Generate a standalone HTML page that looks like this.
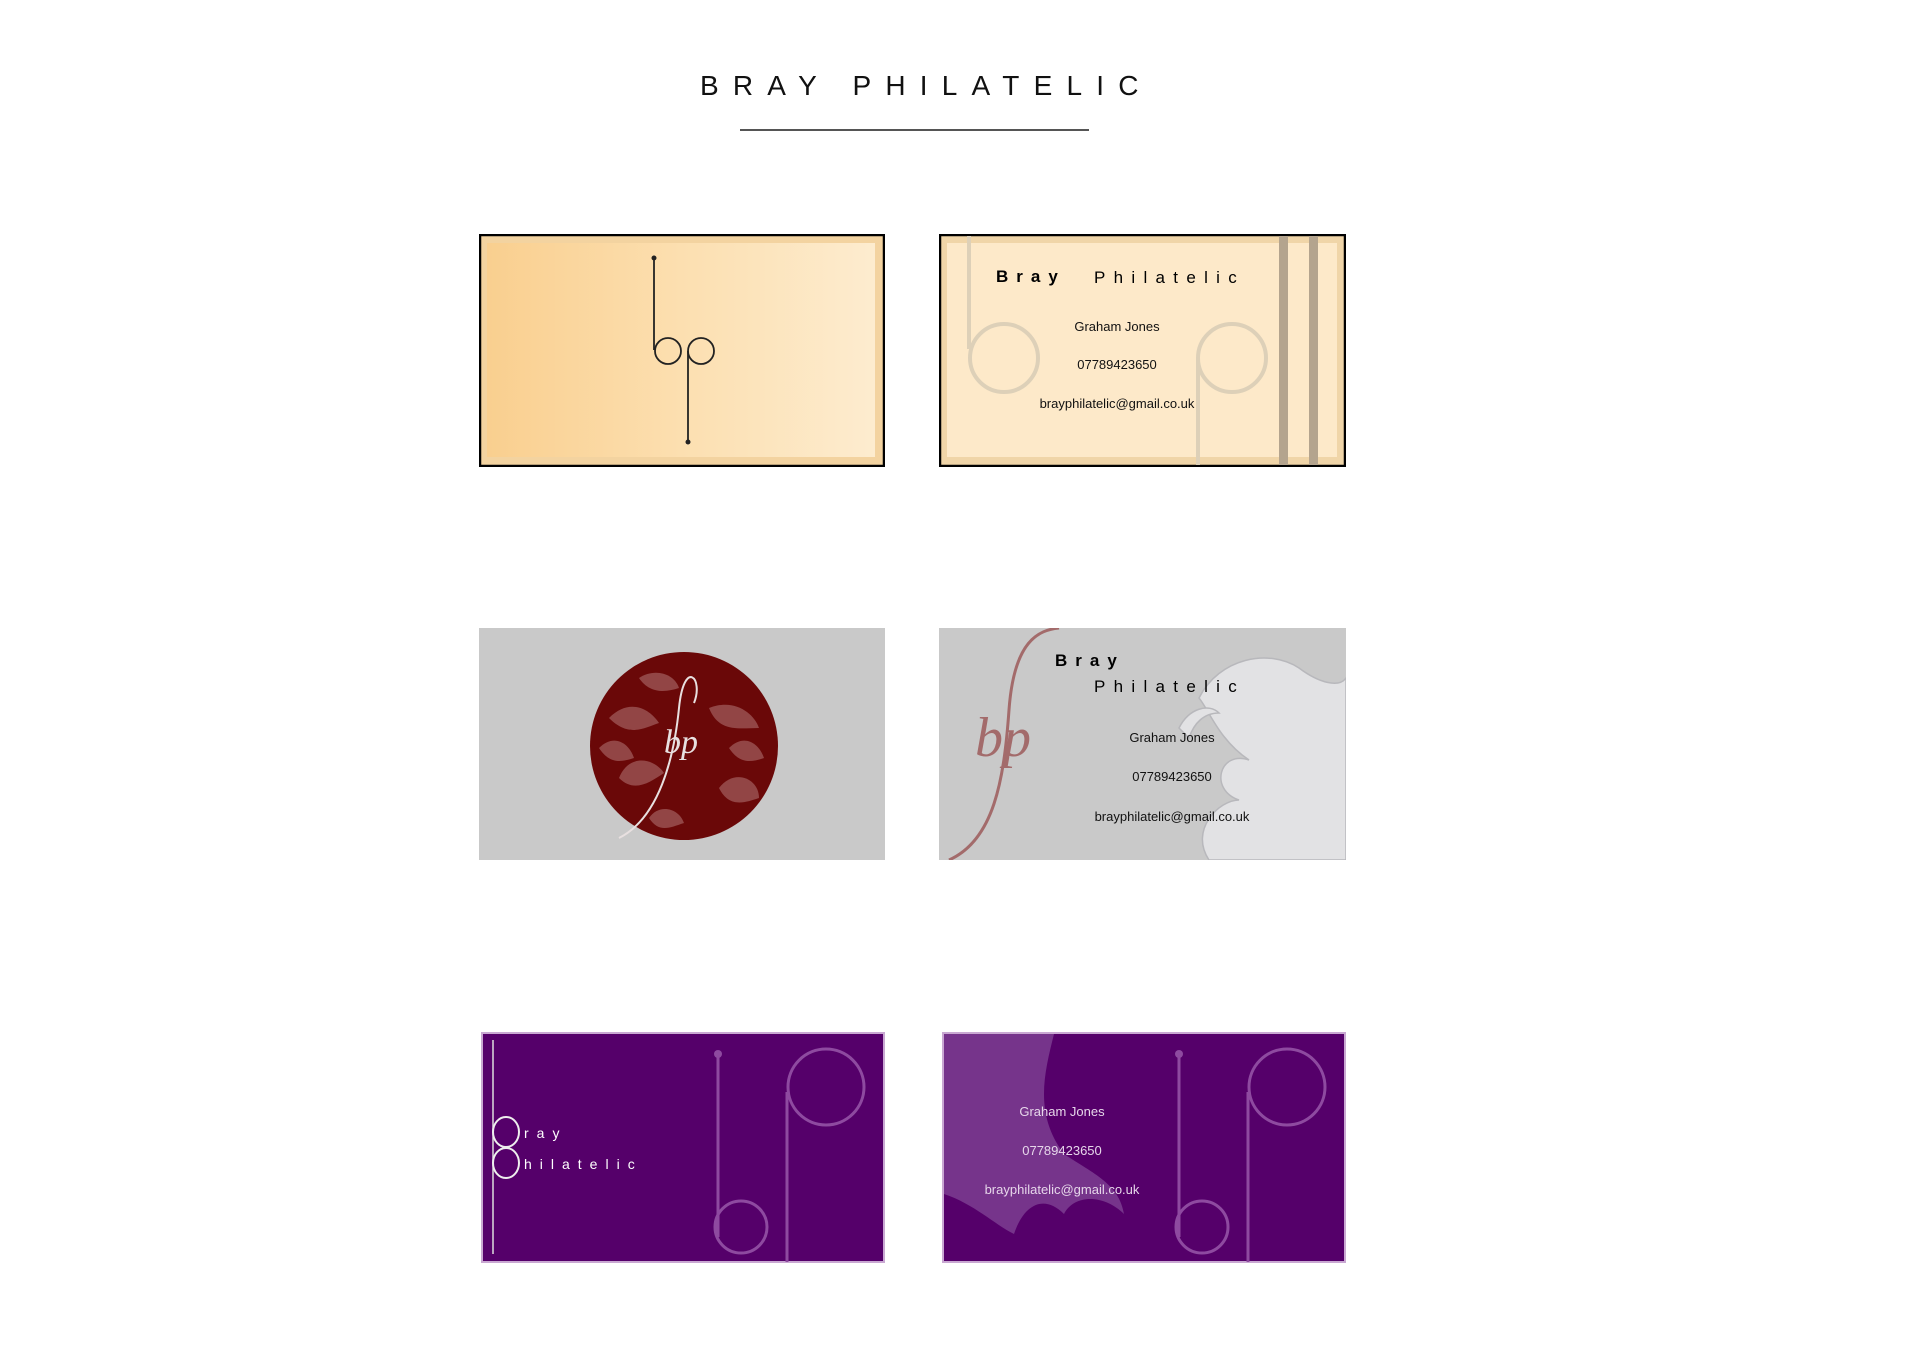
<!DOCTYPE html>
<html><head><meta charset="utf-8"><style>
body{margin:0;background:#fff;width:1920px;height:1358px;position:relative;overflow:hidden;font-family:"Liberation Sans",sans-serif}
.t{position:absolute;left:700px;top:70px;font-size:28px;letter-spacing:14.2px;color:#111;white-space:nowrap}
.u{position:absolute;left:740px;top:129px;width:349px;height:2px;background:#555}
svg{position:absolute}
</style></head><body>
<div class="t">BRAY PHILATELIC</div>
<div class="u"></div>

<!-- card 1 -->
<svg style="left:479px;top:234px" width="406" height="233" viewBox="0 0 406 233">
<defs><linearGradient id="g1" x1="0" x2="1"><stop offset="0" stop-color="#f9cf8f"/><stop offset="0.5" stop-color="#fcdfb0"/><stop offset="1" stop-color="#fdeccf"/></linearGradient></defs>
<rect x="1" y="1" width="404" height="231" fill="#f3d3a0" stroke="#000" stroke-width="2.5"/>
<rect x="8" y="9" width="388" height="214" fill="url(#g1)"/>
<g fill="none" stroke="#222" stroke-width="1.8">
<line x1="175" y1="24" x2="175" y2="116"/>
<ellipse cx="189" cy="117" rx="13" ry="13"/>
<ellipse cx="222" cy="117" rx="13" ry="13"/>
<line x1="209" y1="117" x2="209" y2="208"/>
</g>
<circle cx="175" cy="24" r="2.5" fill="#222"/><circle cx="209" cy="208" r="2.5" fill="#222"/>
</svg>

<!-- card 2 -->
<svg style="left:939px;top:234px" width="407" height="233" viewBox="0 0 407 233" font-family="Liberation Sans, sans-serif">
<rect x="1" y="1" width="405" height="231" fill="#f0d5a8" stroke="#000" stroke-width="2.5"/>
<rect x="8" y="9" width="390" height="214" fill="#fde9c9"/>
<rect x="340" y="2" width="9" height="229" fill="#b4a48e"/>
<rect x="370" y="2" width="9" height="229" fill="#b4a48e"/>
<g fill="none" stroke="#ddd0b8" stroke-width="4">
<line x1="30" y1="2" x2="30" y2="115"/>
<circle cx="65" cy="124" r="34"/>
<circle cx="293" cy="124" r="34"/>
<line x1="259" y1="124" x2="259" y2="231"/>
</g>
<text x="57" y="48" font-size="17" font-weight="bold" letter-spacing="8">Bray</text>
<text x="155" y="49" font-size="17" letter-spacing="8.3">Philatelic</text>
<g font-size="13" text-anchor="middle" fill="#111">
<text x="178" y="97">Graham Jones</text>
<text x="178" y="135">07789423650</text>
<text x="178" y="174">brayphilatelic@gmail.co.uk</text>
</g>
</svg>

<!-- card 3 -->
<svg style="left:479px;top:628px" width="406" height="232" viewBox="0 0 406 232">
<rect width="406" height="232" fill="#c9c9c9"/>
<circle cx="205" cy="118" r="94" fill="#6a0808"/>
<g fill="#a05a5a" opacity="0.75">
<path d="M130 90c20-20 40-10 50 5-15 5-30 15-50-5z"/><path d="M140 150c10-25 35-20 45-5-15 10-30 20-45 5z"/>
<path d="M230 80c25-10 45 5 50 20-20 0-40 5-50-20z"/><path d="M240 160c15-20 40-10 40 10-15 5-30 10-40-10z"/>
<path d="M160 50c15-10 35-5 40 10-15 5-30 5-40-10z"/><path d="M170 190c10-15 30-10 35 5-15 5-25 10-35-5z"/>
<path d="M120 120c15-15 30-5 35 10-15 5-25 5-35-10z"/><path d="M250 120c15-15 30-5 35 10-15 5-25 5-35-10z"/>
</g>
<path d="M140 210c40-20 55-80 60-130s25-30 15-5" fill="none" stroke="#e8e0e0" stroke-width="2"/>
<text x="185" y="125" font-family="Liberation Serif,serif" font-style="italic" font-size="34" fill="#e8e0e0">bp</text>
</svg>

<!-- card 4 -->
<svg style="left:939px;top:628px" width="407" height="232" viewBox="0 0 407 232" font-family="Liberation Sans, sans-serif">
<rect width="407" height="232" fill="#c9c9c9"/>
<g fill="#e2e2e4" stroke="#b8b8bc" stroke-width="1.5">
<path d="M260 70c20-40 70-50 100-30 20 15 40 20 47 10v182H270c-20-30 10-60 30-60-30-10-20-50 10-40-30-20-40-50-50-62z"/>
<path d="M240 100c10-20 30-25 40-15-15 0-25 10-30 25z"/>
</g>
<path d="M10 232c45-20 55-80 60-150s30-80 50-82" fill="none" stroke="#a36b6b" stroke-width="3"/>
<text x="36" y="128" font-family="Liberation Serif,serif" font-style="italic" font-size="56" fill="#a36b6b">bp</text>
<text x="116" y="38" font-size="17" font-weight="bold" letter-spacing="8">Bray</text>
<text x="155" y="64" font-size="17" letter-spacing="8.3">Philatelic</text>
<g font-size="13" text-anchor="middle" fill="#111">
<text x="233" y="114">Graham Jones</text>
<text x="233" y="153">07789423650</text>
<text x="233" y="193">brayphilatelic@gmail.co.uk</text>
</g>
</svg>

<!-- card 5 -->
<svg style="left:481px;top:1032px" width="404" height="231" viewBox="0 0 404 231" font-family="Liberation Sans, sans-serif">
<rect x="1" y="1" width="402" height="229" fill="#55006a" stroke="#c9a8d2" stroke-width="2"/>
<g fill="none" stroke="#8e4aa0" stroke-width="3">
<line x1="237" y1="22" x2="237" y2="205"/>
<circle cx="260" cy="195" r="26"/>
<line x1="306" y1="60" x2="306" y2="230"/>
<circle cx="345" cy="55" r="38"/>
</g>
<circle cx="237" cy="22" r="4" fill="#8e4aa0"/>
<line x1="12" y1="8" x2="12" y2="222" stroke="#ddd" stroke-width="1.5"/>
<g fill="none" stroke="#eee" stroke-width="2"><ellipse cx="25" cy="100" rx="13" ry="15"/><ellipse cx="25" cy="131" rx="13" ry="15"/></g>
<g fill="#fff" font-size="14" letter-spacing="8"><text x="43" y="106">ray</text><text x="43" y="137">hilatelic</text></g>
</svg>

<!-- card 6 -->
<svg style="left:942px;top:1032px" width="404" height="231" viewBox="0 0 404 231" font-family="Liberation Sans, sans-serif">
<rect x="1" y="1" width="402" height="229" fill="#55006a" stroke="#c9a8d2" stroke-width="2"/>
<g fill="#7a3a8f" opacity="0.9">
<path d="M2 2h110c-10 40-20 80 10 120 30 20 55 30 60 60-20-20-50-20-60 0-20-20-40-10-50 20-20-10-40-30-70-40z"/>
</g>
<g fill="none" stroke="#8e4aa0" stroke-width="3">
<line x1="237" y1="22" x2="237" y2="205"/>
<circle cx="260" cy="195" r="26"/>
<line x1="306" y1="60" x2="306" y2="230"/>
<circle cx="345" cy="55" r="38"/>
</g>
<circle cx="237" cy="22" r="4" fill="#8e4aa0"/>
<g font-size="13" text-anchor="middle" fill="#e6d6ea">
<text x="120" y="84">Graham Jones</text>
<text x="120" y="123">07789423650</text>
<text x="120" y="162">brayphilatelic@gmail.co.uk</text>
</g>
</svg>
</body></html>
